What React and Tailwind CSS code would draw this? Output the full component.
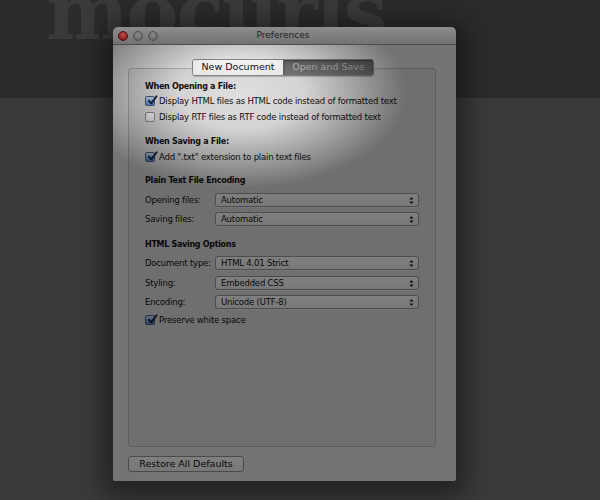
import React from "react";

function Check() {
  return (
    <svg width="11" height="11" viewBox="0 0 11 11" className="absolute left-[1px] top-[-2px]">
      <path d="M2 5.8 L4.3 8.4 L9.6 1.2" fill="none" stroke="#16233a" strokeWidth="1.9" strokeLinecap="round" strokeLinejoin="round" />
    </svg>
  );
}

function Checkbox({ checked, label }) {
  return (
    <div className="flex h-[14px] items-center gap-[4px]">
      {checked ? (
        <div className="relative h-[10px] w-[10px] rounded-[2px] border border-[#4d5d78] bg-[linear-gradient(#cfe0f8,#7fa9e6_55%,#5d8fdc)]">
          <Check />
        </div>
      ) : (
        <div className="h-[10px] w-[10px] rounded-[2px] border border-[#8d8d8d] bg-[linear-gradient(#ffffff,#ececec)]" />
      )}
      <span className="text-[8.5px] tracking-[-0.2px] text-[#111]">{label}</span>
    </div>
  );
}

function Heading({ children, className = "" }) {
  return (
    <div className={"flex h-[14px] items-center text-[8px] font-bold tracking-[-0.3px] text-[#111] " + className}>
      {children}
    </div>
  );
}

function SelectRow({ label, value, className = "" }) {
  return (
    <div className={"flex h-[14px] items-center " + className}>
      <span className="w-[70px] shrink-0 text-[8.5px] tracking-[-0.2px] text-[#111]">{label}</span>
      <div className="flex h-[14px] flex-1 items-center justify-between rounded-[3px] border border-[#9a9a9a] bg-[linear-gradient(#ffffff,#f1f1f1)] pl-[5px] pr-[4px] shadow-[0_1px_0_rgba(255,255,255,0.4)]">
        <span className="text-[8.5px] tracking-[-0.2px] text-[#111]">{value}</span>
        <svg width="5" height="9" viewBox="0 0 5 9">
          <polygon points="0.4,3.6 2.5,1 4.6,3.6" fill="#222" />
          <polygon points="0.4,5.4 2.5,8 4.6,5.4" fill="#222" />
        </svg>
      </div>
    </div>
  );
}

function Window() {
  return (
    <div className="absolute left-[113px] top-[27px] flex h-[454px] w-[343px] flex-col overflow-hidden rounded-t-[5px] rounded-b-[3px] shadow-[0_6px_26px_10px_rgba(0,0,0,0.42)]">
      {/* title bar */}
      <div className="flex h-[18px] shrink-0 items-center border-b border-[#4e4e4e] bg-[linear-gradient(#8d8d8d,#727272)] pl-[5px]">
        <div className="flex gap-[5px]">
          <div className="h-[10px] w-[10px] rounded-full border border-[#4a1414] bg-[radial-gradient(circle_at_50%_35%,#c85050,#8a1f1f_70%)]" />
          <div className="h-[10px] w-[10px] rounded-full border border-[#505050] bg-[radial-gradient(circle_at_50%_35%,#8a8a8a,#6a6a6a_70%)]" />
          <div className="h-[10px] w-[10px] rounded-full border border-[#505050] bg-[radial-gradient(circle_at_50%_35%,#8a8a8a,#6a6a6a_70%)]" />
        </div>
        <div className="flex-1 pr-[48px] text-center text-[9px] text-[#1e1e1e]">Preferences</div>
      </div>

      {/* body */}
      <div className="relative flex flex-1 flex-col bg-[#e8e8e8] pl-[15px] pr-[20px] pt-[23px]">
        <div className="relative flex h-[379px] flex-col rounded-[3px] border border-[#b8b8b8] bg-[rgba(0,0,0,0.035)] px-[16px] pt-[11px]">
          {/* tabs */}
          <div className="absolute left-[63px] top-[-10px] flex h-[17px] overflow-hidden rounded-[3px] border border-[#8a8a8a] shadow-[0_1px_1px_rgba(0,0,0,0.2)]">
            <div className="flex w-[90px] items-center justify-center bg-[linear-gradient(#ffffff,#f0f0f0)] text-[9.5px] text-[#111]">
              New Document
            </div>
            <div className="flex w-[90px] items-center justify-center border-l border-[#666] bg-[linear-gradient(#686868,#777777)] text-[9.5px] text-[#bdbdbd] shadow-[inset_0_1px_2px_rgba(0,0,0,0.35)]">
              Open and Save
            </div>
          </div>

          <Heading>When Opening a File:</Heading>
          <Checkbox checked label="Display HTML files as HTML code instead of formatted text" />
          <div className="mt-[2px]">
            <Checkbox label="Display RTF files as RTF code instead of formatted text" />
          </div>

          <Heading className="mt-[11px]">When Saving a File:</Heading>
          <div className="mt-[1px]">
            <Checkbox checked label={'Add ".txt" extension to plain text files'} />
          </div>

          <Heading className="mt-[10px]">Plain Text File Encoding</Heading>
          <SelectRow className="mt-[5px]" label="Opening files:" value="Automatic" />
          <SelectRow className="mt-[5px]" label="Saving files:" value="Automatic" />

          <Heading className="mt-[12px]">HTML Saving Options</Heading>
          <SelectRow className="mt-[4px]" label="Document type:" value="HTML 4.01 Strict" />
          <SelectRow className="mt-[6px]" label="Styling:" value="Embedded CSS" />
          <SelectRow className="mt-[5px]" label="Encoding:" value="Unicode (UTF-8)" />
          <div className="mt-[4px]">
            <Checkbox checked label="Preserve white space" />
          </div>
        </div>

        <div className="mt-[9px] flex h-[16px] w-[116px] items-center justify-center rounded-[3px] border border-[#959595] bg-[linear-gradient(#ffffff,#eeeeee)] text-[9.5px] text-[#111] shadow-[0_1px_0_rgba(255,255,255,0.3)]">
          Restore All Defaults
        </div>

        {/* spotlight dimming overlay */}
        <div className="pointer-events-none absolute inset-0 bg-[image:radial-gradient(ellipse_165px_95px_at_128px_48px,rgba(0,0,0,0)_0%,rgba(0,0,0,0.05)_38%,rgba(0,0,0,0.5)_100%)]" />
      </div>
    </div>
  );
}

export default function App() {
  return (
    <div className="relative flex h-[500px] w-[600px] flex-col overflow-hidden bg-[#3a3a3a] font-['DejaVu_Sans',sans-serif]">
      <div className="h-[98px] shrink-0 overflow-hidden bg-[#2b2b2b]">
        <div className="ml-[46px] mt-[-27px] whitespace-nowrap font-['DejaVu_Serif',serif] text-[78px] font-bold leading-none tracking-[-2px] text-[#3a3a3a]">
          mocurls
        </div>
      </div>
      <div className="flex-1" />
      <Window />
    </div>
  );
}
